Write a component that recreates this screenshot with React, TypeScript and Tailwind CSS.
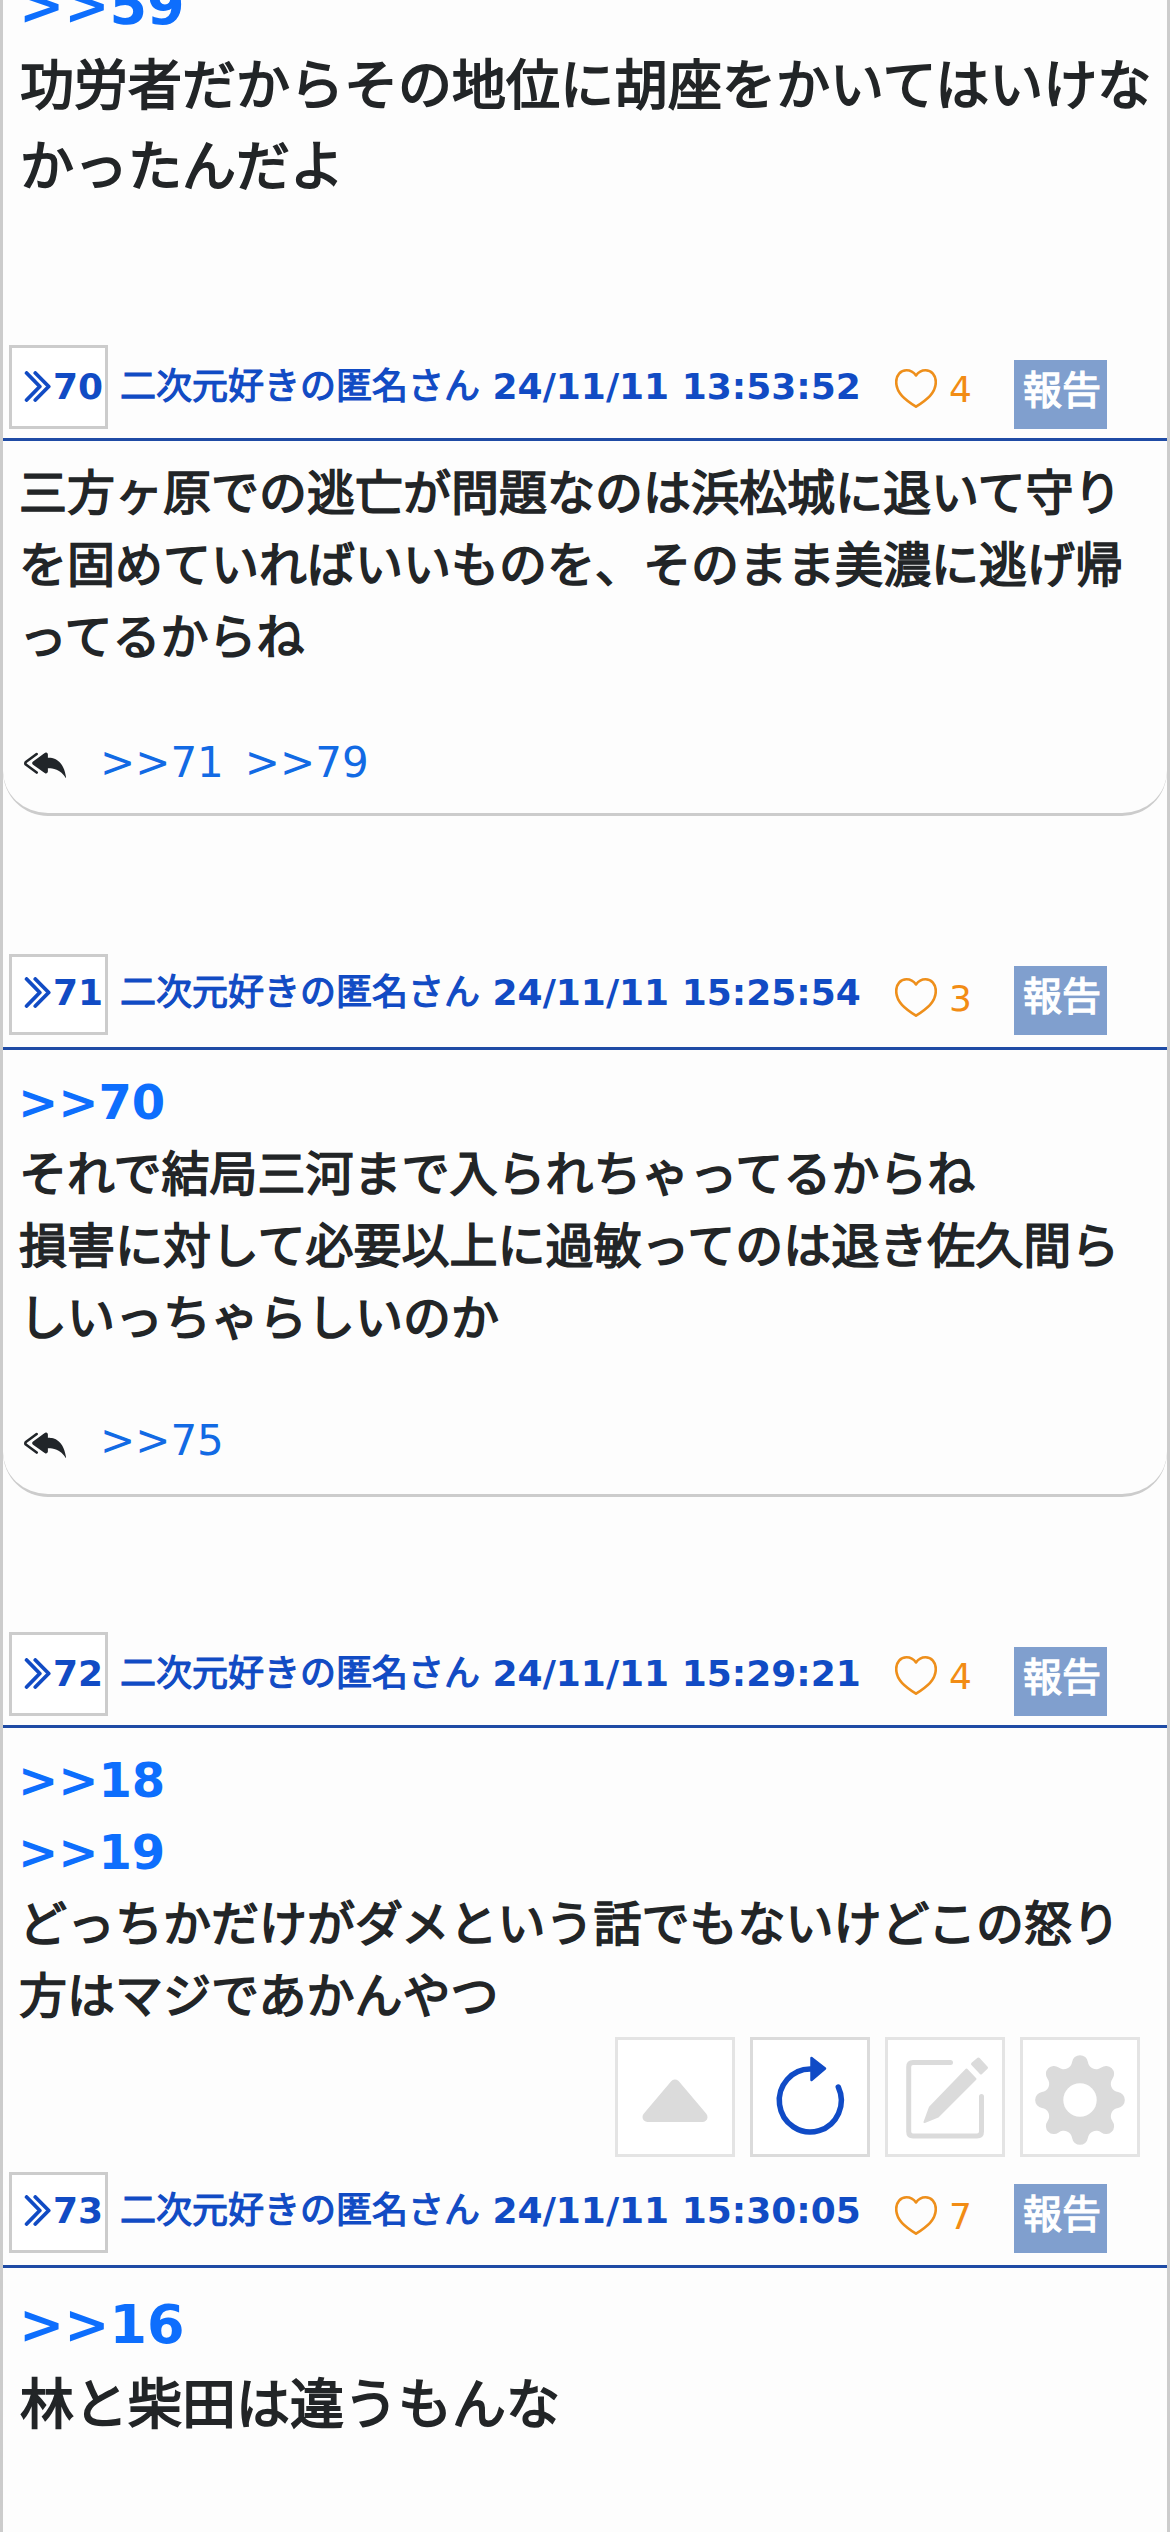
import clsx from 'clsx';
import { BsReplyAllFill } from 'react-icons/bs';

type Post = {
  id: number;
  time?: string;
  likes?: number;
  anchors: string[];
  body: string;
  replies?: string[];
  large?: boolean;
  // compact rows sit 3px higher inside the header and the footer
  compact?: boolean;
  className?: string;
};

const posts: Post[] = [
  {
    id: 69,
    anchors: ['>>59'],
    body: '功労者だからその地位に胡座をかいてはいけなかったんだよ',
    large: true,
    className: '-mt-[51px] mb-[137px]',
  },
  {
    id: 70,
    time: '24/11/11 13:53:52',
    likes: 4,
    anchors: [],
    body: '三方ヶ原での逃亡が問題なのは浜松城に退いて守りを固めていればいいものを、そのまま美濃に逃げ帰ってるからね',
    replies: ['>>71', '>>79'],
    className: 'mb-[138px]',
  },
  {
    id: 71,
    time: '24/11/11 15:25:54',
    likes: 3,
    anchors: ['>>70'],
    body: 'それで結局三河まで入られちゃってるからね\n損害に対して必要以上に過敏ってのは退き佐久間らしいっちゃらしいのか',
    replies: ['>>75'],
    compact: true,
    className: 'mb-[135px]',
  },
  {
    id: 72,
    time: '24/11/11 15:29:21',
    likes: 4,
    anchors: ['>>18', '>>19'],
    body: 'どっちかだけがダメという話でもないけどこの怒り方はマジであかんやつ',
    className: 'mb-[140px]',
  },
  {
    id: 73,
    time: '24/11/11 15:30:05',
    likes: 7,
    anchors: ['>>16'],
    body: '林と柴田は違うもんな',
    large: true,
    compact: true,
  },
];

// softer than the bold cut of the Japanese face
const kanaBold = 'font-normal [-webkit-text-stroke:0.034em_currentColor]';

function HeartIcon() {
  return (
    <svg viewBox="0 0 42 39" className="mt-6 h-[39px] w-[42px]" fill="none" stroke="#ee8f1b" strokeWidth="2.6" strokeLinejoin="round">
      <path d="M21 6.500C18.500 3 15.500 1.300 11.500 1.300C5.500 1.300 1.200 6 1.200 13C1.200 24 10 30.500 21 37.700C32 30.500 40.800 24 40.800 13C40.800 6 36.500 1.300 30.500 1.300C26.500 1.300 23.500 3 21 6.500Z" />
    </svg>
  );
}

function PostHeader({ post }: { post: Post }) {
  return (
    <header className="flex h-24 items-start border-b-[3px] border-[#1f4ba5] pl-1.5">
      <button
        className={clsx(
          'flex w-[99px] shrink-0 items-start border-[3px] border-[#ccc] bg-white pl-3 text-4xl leading-[42px] font-bold text-[#114bc4]',
          post.compact ? 'h-[81px] pt-[15px]' : 'h-[84px] pt-[18px]'
        )}
      >
        <svg viewBox="0 0 27 31" className="mt-[5px] h-[31px] w-[27px] shrink-0" fill="none" stroke="currentColor" strokeWidth="3.8" strokeLinecap="round" strokeLinejoin="round">
          <path d="M2.600 2L15.800 15.500L2.600 29M11.300 2L24.700 15.500L11.300 29" />
        </svg>
        <span className="ml-0.5">{post.id}</span>
      </button>
      <div className={clsx('ml-3 w-[775px] shrink-0 text-4xl leading-[42px] font-bold whitespace-nowrap text-[#114bc4]', post.compact ? 'mt-[18px]' : 'mt-[21px]')}>
        <span className={kanaBold}>二次元好きの匿名さん</span> {post.time}
      </div>
      <button className="flex w-[119px] shrink-0 items-start gap-3 text-4xl leading-[42px] text-[#f28c14]">
        <HeartIcon />
        <span className="mt-6">{post.likes}</span>
      </button>
      <button
        className={clsx(
          'flex h-[69px] w-[93px] shrink-0 items-start bg-[#809fce] pt-2 pl-[9px] text-[39px] leading-[45px] whitespace-nowrap text-white',
          post.compact ? 'mt-3' : 'mt-[15px]'
        )}
      >
        <span className={kanaBold}>報告</span>
      </button>
    </header>
  );
}

function PostCard({ post }: { post: Post }) {
  return (
    <article className={clsx(post.className, post.replies && 'rounded-b-[45px] border-b-[3px] border-[#ccc]')}>
      {post.time && <PostHeader post={post} />}
      <div
        className={clsx(
          'pt-4 pr-3.5 text-[#222527]',
          post.large ? 'pl-4 text-[54px] leading-[81px]' : 'pl-[15px] text-5xl leading-[72px]'
        )}
      >
        {post.anchors.map((a) => (
          <div key={a} className="font-bold text-[#0d6efd]">
            {a}
          </div>
        ))}
        <p className={clsx('-mr-px ml-px whitespace-pre-line', kanaBold)}>{post.body}</p>
      </div>
      {post.replies && (
        <footer className="flex h-[140px] items-start pl-[21px]">
          <BsReplyAllFill className={clsx('size-[42px] shrink-0 text-[#212529]', post.compact ? 'mt-[68px]' : 'mt-[69px]')} />
          <div className={clsx('ml-[34px] flex gap-[21px] text-[42px] leading-[49px] text-[#126ae4]', post.compact ? 'mt-[62px]' : 'mt-[65px]')}>
            {post.replies.map((r) => (
              <span key={r}>{r}</span>
            ))}
          </div>
        </footer>
      )}
    </article>
  );
}

const toolClass = 'size-[120px] border-[3px] border-[#e4e4e4] bg-white';

function Toolbar() {
  return (
    <div className="absolute top-[2037px] right-[27px] flex gap-[15px]">
      <button className={toolClass}>
        <svg viewBox="3 3 114 114" className="size-full" fill="#dbdbdb" stroke="#dbdbdb" strokeWidth="10" strokeLinejoin="round">
          <path d="M60 47.500L87.500 80H32.500Z" />
        </svg>
      </button>
      <button className="size-[120px] border-[3px] border-[#dbdbdb] bg-white">
        <svg viewBox="3 3 114 114" className="size-full" fill="none" stroke="#104bc6" strokeLinecap="round" strokeLinejoin="round">
          <path d="M61 32A31 31.500 0 1 0 88.300 50" strokeWidth="5.500" />
          <path d="M61.500 21L75 31.500L61.500 43Z" fill="#104bc6" strokeWidth="2.500" />
        </svg>
      </button>
      <button className={toolClass}>
        <svg viewBox="3 3 114 114" className="size-full" fill="#dbdbdb" stroke="#dbdbdb" strokeLinecap="round" strokeLinejoin="round">
          <path d="M65.500 25.500H28Q23.700 25.500 23.700 30V94.500Q23.700 99 28 99H92Q96.500 99 96.500 94.500V59.500" fill="none" strokeWidth="5" />
          <path d="M81.500 32.500L90.500 42L53 79.500L39.500 85L44.800 70.500Z" strokeWidth="2" />
          <path d="M93.500 22L101.500 30.700L96 36L87.500 27Z" strokeWidth="3" />
        </svg>
      </button>
      <button className={toolClass}>
        <svg viewBox="3 3 114 114" className="size-full" fill="#dbdbdb">
          <g transform="translate(60 63)">
            <path d="M38.100 -7.900A8 8 0 0 1 38.100 7.900A8.400 8.400 0 0 0 32.500 21.300A8 8 0 0 1 21.300 32.500A8.400 8.400 0 0 0 7.900 38.100A8 8 0 0 1 -7.900 38.100A8.400 8.400 0 0 0 -21.300 32.500A8 8 0 0 1 -32.500 21.300A8.400 8.400 0 0 0 -38.100 7.900A8 8 0 0 1 -38.100 -7.900A8.400 8.400 0 0 0 -32.500 -21.300A8 8 0 0 1 -21.300 -32.500A8.400 8.400 0 0 0 -7.900 -38.100A8 8 0 0 1 7.900 -38.100A8.400 8.400 0 0 0 21.300 -32.500A8 8 0 0 1 32.500 -21.300A8.400 8.400 0 0 0 38.100 -7.900Z" />
            <circle r="16.700" fill="#fff" />
          </g>
        </svg>
      </button>
    </div>
  );
}

export default function App() {
  return (
    <main
      lang="ja"
      className="relative flex h-[2532px] w-[1170px] flex-col overflow-hidden border-x-[3px] border-[#ccc] bg-[#fdfdfd] font-['DejaVu_Sans','Noto_Sans_CJK_JP',sans-serif]"
    >
      {posts.map((post) => (
        <PostCard key={post.id} post={post} />
      ))}
      <Toolbar />
    </main>
  );
}
